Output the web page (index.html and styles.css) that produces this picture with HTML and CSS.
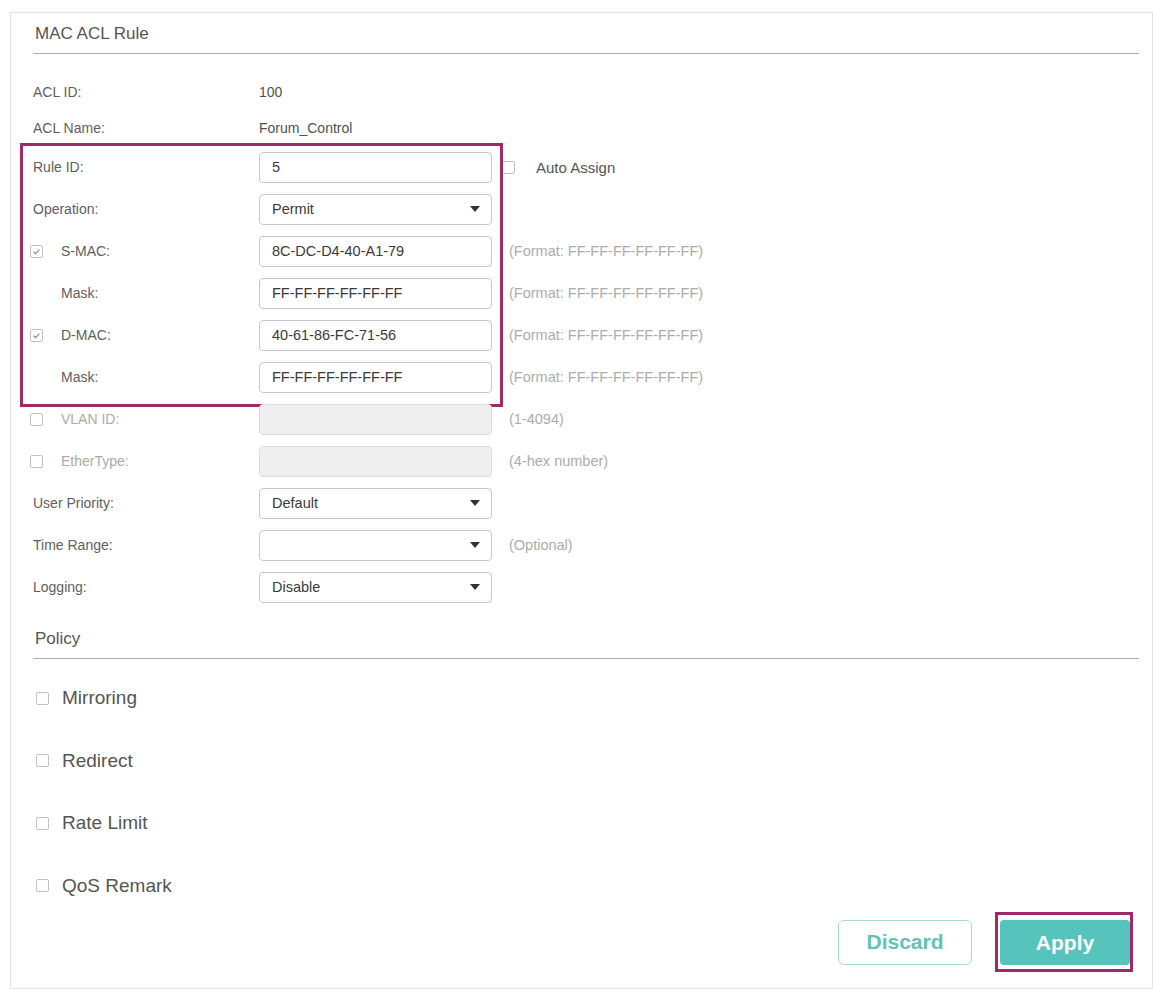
FILE: index.html
```html
<!DOCTYPE html>
<html lang="en">
<head>
<meta charset="utf-8">
<title>MAC ACL Rule</title>
<link rel="stylesheet" href="styles.css">
</head>
<body>
<div class="panel">
  <div class="sec-head">MAC ACL Rule</div>

  <div class="info-list">
    <div class="row info"><span class="label">ACL ID:</span><span class="value">100</span></div>
    <div class="row info"><span class="label">ACL Name:</span><span class="value">Forum_Control</span></div>
  </div>

  <div class="group marked">
    <div class="row">
      <span class="label">Rule ID:</span>
      <div class="field"><span class="field-text">5</span></div>
      <span class="after"><span class="cb"></span><span class="after-text">Auto Assign</span></span>
    </div>
    <div class="row">
      <span class="label">Operation:</span>
      <div class="field select"><span class="field-text">Permit</span><span class="caret"></span></div>
    </div>
    <div class="row">
      <span class="label"><span class="cb checked"><svg viewBox="0 0 13 13"><path d="M3 6.8 L5.4 9.1 L10 4.2"/></svg></span>S-MAC:</span>
      <div class="field"><span class="field-text">8C-DC-D4-40-A1-79</span></div>
      <span class="hint">(Format: FF-FF-FF-FF-FF-FF)</span>
    </div>
    <div class="row">
      <span class="label sub">Mask:</span>
      <div class="field"><span class="field-text">FF-FF-FF-FF-FF-FF</span></div>
      <span class="hint">(Format: FF-FF-FF-FF-FF-FF)</span>
    </div>
    <div class="row">
      <span class="label"><span class="cb checked"><svg viewBox="0 0 13 13"><path d="M3 6.8 L5.4 9.1 L10 4.2"/></svg></span>D-MAC:</span>
      <div class="field"><span class="field-text">40-61-86-FC-71-56</span></div>
      <span class="hint">(Format: FF-FF-FF-FF-FF-FF)</span>
    </div>
    <div class="row">
      <span class="label sub">Mask:</span>
      <div class="field"><span class="field-text">FF-FF-FF-FF-FF-FF</span></div>
      <span class="hint">(Format: FF-FF-FF-FF-FF-FF)</span>
    </div>
  </div>

  <div class="group">
    <div class="row">
      <span class="label off"><span class="cb"></span>VLAN ID:</span>
      <div class="field disabled"></div>
      <span class="hint">(1-4094)</span>
    </div>
    <div class="row">
      <span class="label off"><span class="cb"></span>EtherType:</span>
      <div class="field disabled"></div>
      <span class="hint">(4-hex number)</span>
    </div>
    <div class="row">
      <span class="label">User Priority:</span>
      <div class="field select"><span class="field-text">Default</span><span class="caret"></span></div>
    </div>
    <div class="row">
      <span class="label">Time Range:</span>
      <div class="field select"><span class="field-text"></span><span class="caret"></span></div>
      <span class="hint">(Optional)</span>
    </div>
    <div class="row">
      <span class="label">Logging:</span>
      <div class="field select"><span class="field-text">Disable</span><span class="caret"></span></div>
    </div>
  </div>

  <div class="sec-head policy-head">Policy</div>

  <div class="policy-list">
    <div class="policy-item"><span class="cb"></span>Mirroring</div>
    <div class="policy-item"><span class="cb"></span>Redirect</div>
    <div class="policy-item"><span class="cb"></span>Rate Limit</div>
    <div class="policy-item"><span class="cb"></span>QoS Remark</div>
  </div>

  <div class="actions">
    <button class="btn btn-ghost" type="button">Discard</button>
    <div class="btn-frame"><button class="btn btn-solid" type="button">Apply</button></div>
  </div>
</div>
</body>
</html>
```

FILE: styles.css
```css
* {
  box-sizing: border-box;
}

html, body {
  margin: 0;
  padding: 0;
  background: #ffffff;
}

body {
  font-family: "Liberation Sans", Arial, sans-serif;
  color: #555;
}

.panel {
  margin: 12px 0 0 10px;
  width: 1143px;
  height: 977px;
  border: 1px solid #e2e2e2;
  padding: 0 13px 0 22px;
}

/* section titles with the rule underneath */
.sec-head {
  height: 41px;
  display: flex;
  align-items: center;
  border-bottom: 1px solid #adadad;
  font-size: 17px;
  color: #555;
  padding-left: 2px;
  padding-top: 1px;
}

.info-list {
  padding-top: 20px;
}

.row {
  display: grid;
  grid-template-columns: 226px 233px auto;
  align-items: center;
  height: 42px;
  font-size: 14px;
}

.row.info {
  height: 36px;
}

.label {
  display: flex;
  align-items: center;
  color: #606060;
  white-space: nowrap;
}

.label.sub {
  padding-left: 28px;
}

.label.off {
  color: #ababab;
}

.value {
  color: #505050;
}

.group {
  position: relative;
}

/* highlight frame drawn over the edited rows */
.group.marked::before {
  content: "";
  position: absolute;
  left: -13px;
  top: -3px;
  width: 477px;
  height: 258px;
  border: 3px solid #9e2a69;
  pointer-events: none;
}

.field {
  height: 31px;
  border: 1px solid #c9c9c9;
  border-radius: 4px;
  background: #fff;
  display: flex;
  align-items: center;
  padding: 0 11px 0 12px;
  color: #3a3a3a;
  font-size: 14.5px;
}

.field.disabled {
  background: #efefef;
  border-color: #dcdcdc;
}

.field-text {
  flex: 1;
}

.caret {
  width: 0;
  height: 0;
  border-left: 5px solid transparent;
  border-right: 5px solid transparent;
  border-top: 6px solid #333;
}

.hint {
  padding-left: 17px;
  font-size: 14.5px;
  color: #acacac;
  white-space: nowrap;
}

.after {
  display: flex;
  align-items: center;
  padding-left: 10px;
  font-size: 15px;
  color: #555;
}

.after-text {
  margin-left: 21px;
}

/* checkboxes */
.cb {
  display: inline-flex;
  width: 13px;
  height: 13px;
  border: 1px solid #c2c2c2;
  border-radius: 2px;
  background: #fff;
  flex: none;
}

.label .cb {
  margin-left: -3px;
  margin-right: 18px;
}

.cb svg {
  width: 100%;
  height: 100%;
}

.cb svg path {
  fill: none;
  stroke: #8a8a8a;
  stroke-width: 1.3;
}

.policy-head {
  margin-top: 10px;
}

.policy-list {
  padding-top: 8px;
}

.policy-item {
  height: 62.5px;
  display: flex;
  align-items: center;
  font-size: 19px;
  color: #555;
  padding-left: 3px;
}

.policy-item .cb {
  margin-right: 13px;
}

.actions {
  display: flex;
  justify-content: flex-end;
  align-items: center;
  margin-top: -5px;
  padding-right: 6px;
  gap: 23px;
}

.btn {
  font-family: "Liberation Sans", Arial, sans-serif;
  font-size: 21px;
  cursor: pointer;
}

.btn-ghost {
  width: 134px;
  height: 45px;
  border: 1px solid #a6dbd4;
  border-radius: 6px;
  background: #fff;
  color: #63c2b7;
  font-weight: bold;
}

.btn-frame {
  width: 138px;
  height: 60px;
  border: 3px solid #9e2a69;
  padding: 5px 0 4px 2px;
}

.btn-solid {
  width: 130px;
  height: 45px;
  border: none;
  border-radius: 4px;
  background: #56c3bd;
  color: #fff;
  font-weight: bold;
}
```
